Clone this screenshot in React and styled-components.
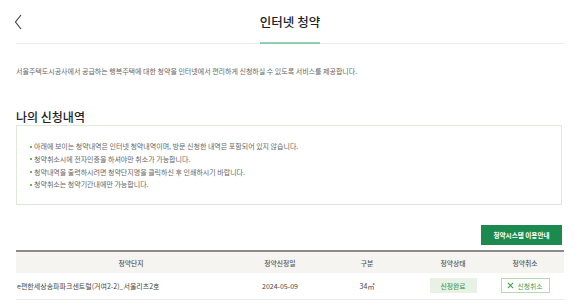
import React from 'react'
import styled, { createGlobalStyle } from 'styled-components'

const GlobalStyle = createGlobalStyle`
  * { box-sizing: border-box; }
  body {
    margin: 0;
    background: #fff;
    font-family: "Noto Sans CJK KR", "Noto Sans", sans-serif;
    color: #333;
  }
`

const notices = [
  '아래에 보이는 청약내역은 인터넷 청약내역이며, 방문 신청한 내역은 포함되어 있지 않습니다.',
  '청약취소시에 전자인증을 하셔야만 취소가 가능합니다.',
  '청약내역을 출력하시려면 청약단지명을 클릭하신 후 인쇄하시기 바랍니다.',
  '청약취소는 청약기간내에만 가능합니다.',
]

const columns = [
  { label: '청약단지', width: 230 },
  { label: '청약신청일', width: 68 },
  { label: '구분', width: 106 },
  { label: '청약상태', width: 66 },
  { label: '청약취소', width: 78 },
]

function App() {
  return (
    <Page>
      <GlobalStyle />
      <Header>
        <BackButton aria-label="뒤로">
          <svg width="10" height="16" viewBox="0 0 10 16">
            <polyline points="7,1 1.5,8 7,15" fill="none" stroke="#444" strokeWidth="1.2" />
          </svg>
        </BackButton>
        <Title>인터넷 청약</Title>
        <span />
      </Header>

      <Description>
        서울주택도시공사에서 공급하는 행복주택에 대한 청약을 인터넷에서 편리하게 신청하실 수 있도록 서비스를 제공합니다.
      </Description>

      <SectionTitle>나의 신청내역</SectionTitle>

      <NoticeBox>
        {notices.map((n) => (
          <NoticeItem key={n}>{n}</NoticeItem>
        ))}
      </NoticeBox>

      <ButtonRow>
        <GuideButton>청약시스템 이용안내</GuideButton>
      </ButtonRow>

      <Table>
        <colgroup>
          {columns.map((c) => (
            <col key={c.label} style={{ width: c.width }} />
          ))}
        </colgroup>
        <thead>
          <tr>
            {columns.map((c) => (
              <Th key={c.label}>{c.label}</Th>
            ))}
          </tr>
        </thead>
        <tbody>
          <tr>
            <Td align="left">e편한세상송파파크센트럴(거여2-2)_서울리츠2호</Td>
            <Td>2024-05-09</Td>
            <Td>34㎡</Td>
            <Td>
              <StatusBadge>신청완료</StatusBadge>
            </Td>
            <Td>
              <CancelButton>
                <svg width="7" height="7" viewBox="0 0 8 8">
                  <path d="M1 1 L7 7 M7 1 L1 7" stroke="#3f9a52" strokeWidth="1.2" />
                </svg>
                신청취소
              </CancelButton>
            </Td>
          </tr>
        </tbody>
      </Table>
    </Page>
  )
}

export default App

const Page = styled.div`
  width: 580px;
  padding: 0 16px;
`

const Header = styled.header`
  height: 44px;
  display: grid;
  grid-template-columns: 1fr auto 1fr;
  align-items: end;
  border-bottom: 1px solid #ececec;
`

const BackButton = styled.button`
  align-self: center;
  justify-self: start;
  background: none;
  border: 0;
  padding: 0;
  margin-left: -2px;
  margin-top: 1px;
  display: flex;
  cursor: pointer;
`

const Title = styled.h1`
  margin: 0 0 -1px;
  padding-bottom: 11px;
  font-size: 12.5px;
  font-weight: 500;
  line-height: 18px;
  color: #222;
  border-bottom: 2px solid #8fcfb1;
`

const Description = styled.p`
  margin: 22px 0 0;
  font-size: 7px;
  line-height: 10px;
  color: #666;
`

const SectionTitle = styled.h2`
  margin: 33px 0 0;
  font-size: 12px;
  font-weight: 500;
  line-height: 16px;
  color: #222;
`

const NoticeBox = styled.ul`
  list-style: none;
  margin: 0;
  width: 546px;
  padding: 14px 13px 13px;
  border: 1px solid #dfe9d8;
`

const NoticeItem = styled.li`
  position: relative;
  padding-left: 4px;
  font-size: 7px;
  line-height: 12.8px;
  color: #666;

  &::before {
    content: '';
    position: absolute;
    left: 0;
    top: 5.5px;
    width: 2px;
    height: 2px;
    background: #6cb35a;
  }
`

const ButtonRow = styled.div`
  width: 546px;
  display: flex;
  justify-content: flex-end;
  margin-top: 20px;
`

const GuideButton = styled.button`
  width: 81px;
  height: 20px;
  border: 0;
  padding: 0;
  background: #1c8a4f;
  color: #fff;
  font-family: inherit;
  font-size: 6.6px;
  font-weight: 700;
  cursor: pointer;
`

const Table = styled.table`
  width: 546px;
  margin-top: 5px;
  border-collapse: collapse;
  table-layout: fixed;
  border-top: 2px solid #8a8a8a;
`

const Th = styled.th`
  height: 22px;
  background: #f5f4f0;
  font-size: 6.8px;
  font-weight: 500;
  color: #555;
  text-align: center;
  padding: 0;
`

const Td = styled.td`
  height: 26px;
  padding: 0 1px;
  font-size: 7px;
  color: #444;
  text-align: ${(p) => (p.align === 'left' ? 'left' : 'center')};
  border-bottom: 1px solid #eaeaea;
  white-space: nowrap;
`

const StatusBadge = styled.span`
  display: inline-flex;
  align-items: center;
  justify-content: center;
  width: 47px;
  height: 15px;
  background: #e7f2e5;
  color: #4a9a5a;
  font-size: 6.8px;
  font-weight: 500;
  vertical-align: middle;
`

const CancelButton = styled.button`
  display: inline-flex;
  align-items: center;
  justify-content: center;
  gap: 3px;
  width: 49px;
  height: 15px;
  padding: 0;
  background: #fff;
  border: 1px solid #b3dbab;
  color: #3f9a52;
  font-family: inherit;
  font-size: 6.8px;
  vertical-align: middle;
  cursor: pointer;
`
